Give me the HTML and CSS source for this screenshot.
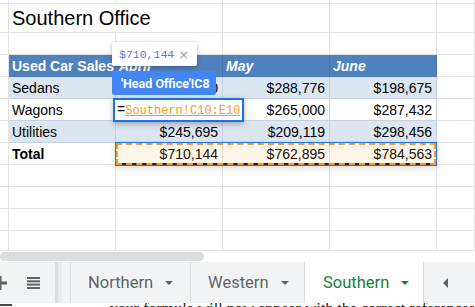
FILE: index.html
```html
<!DOCTYPE html>
<html lang="en">
<head>
    <meta charset="UTF-8">
    <title>Southern Office</title>
    <link rel="stylesheet" href="styles.css">
</head>
<body>
    <div class="sheet">
        <div class="grid">
            <div class="c"></div><div class="c"></div><div class="c"></div><div class="c"></div><div class="c"></div><div class="c"></div>

            <div class="c"></div>
            <div class="c title">Southern Office</div>
            <div class="c"></div><div class="c"></div><div class="c"></div>

            <div class="c"></div><div class="c"></div><div class="c"></div><div class="c"></div><div class="c"></div><div class="c"></div>

            <div class="c"></div>
            <div class="c head">Used Car Sales</div>
            <div class="c head month">April</div>
            <div class="c head month">May</div>
            <div class="c head month">June</div>
            <div class="c"></div>

            <div class="c"></div>
            <div class="c band">Sedans</div>
            <div class="c band num">$231,560</div>
            <div class="c band num">$288,776</div>
            <div class="c band num">$198,675</div>
            <div class="c"></div>

            <div class="c"></div>
            <div class="c plain">Wagons</div>
            <div class="c plain num">$232,889</div>
            <div class="c plain num">$265,000</div>
            <div class="c plain num">$287,432</div>
            <div class="c"></div>

            <div class="c"></div>
            <div class="c band">Utilities</div>
            <div class="c band num">$245,695</div>
            <div class="c band num">$209,119</div>
            <div class="c band num">$298,456</div>
            <div class="c"></div>

            <div class="c"></div>
            <div class="c total">Total</div>
            <div class="c num">$710,144</div>
            <div class="c num">$762,895</div>
            <div class="c num">$784,563</div>
            <div class="c"></div>

            <div class="c"></div><div class="c"></div><div class="c"></div><div class="c"></div><div class="c"></div><div class="c"></div>
            <div class="c"></div><div class="c"></div><div class="c"></div><div class="c"></div><div class="c"></div><div class="c"></div>
            <div class="c"></div><div class="c"></div><div class="c"></div><div class="c"></div><div class="c"></div><div class="c"></div>
            <div class="c"></div><div class="c"></div><div class="c"></div><div class="c"></div><div class="c"></div><div class="c"></div>
        </div>

        <!-- range being referenced by the formula -->
        <div class="range-box"></div>

        <div class="editor">=<span class="ref">Southern!C10:E10</span></div>

        <div class="value-tip">
            <span class="value">$710,144</span>
            <span class="close">&times;</span>
        </div>

        <div class="ref-tip">'Head Office'!C8</div>
    </div>

    <div class="hscroll">
        <div class="thumb"></div>
    </div>

    <div class="tabs">
        <div class="tools">
            <svg class="plus" width="14" height="14" viewBox="0 0 14 14">
                <rect x="0" y="5.5" width="14" height="3" fill="#5f6368"/>
                <rect x="5.5" y="0" width="3" height="14" fill="#5f6368"/>
            </svg>
            <svg class="list" width="13" height="12" viewBox="0 0 13 12">
                <rect x="0" y="0" width="13" height="2" fill="#5f6368"/>
                <rect x="0" y="3.3" width="13" height="2" fill="#5f6368"/>
                <rect x="0" y="6.6" width="13" height="2" fill="#5f6368"/>
                <rect x="0" y="10" width="13" height="2" fill="#5f6368"/>
            </svg>
        </div>
        <div class="divider"></div>
        <div class="tab northern">Northern <span class="caret"></span></div>
        <div class="tab western">Western <span class="caret"></span></div>
        <div class="tab active">Southern <span class="caret"></span></div>
        <div class="nav"><span class="left-arrow"></span></div>
    </div>

    <div class="below">
        <div class="rule"></div>
        <div class="below-text">your formula will now appear with the correct references</div>
    </div>
</body>
</html>
```

FILE: styles.css
```css
* {
    margin: 0;
    padding: 0;
    box-sizing: border-box;
}

body {
    width: 475px;
    height: 307px;
    overflow: hidden;
    background: #fff;
    font-family: "Liberation Sans", Arial, sans-serif;
    color: #000;
}

.sheet {
    position: relative;
    height: 250px;
    overflow: hidden;
}

.grid {
    display: grid;
    grid-template-columns: 9px repeat(4, 107px) 1fr;
    grid-template-rows: 4px 29px repeat(10, 22px);
}

.c {
    border-right: 1px solid #e2e2e2;
    border-bottom: 1px solid #e2e2e2;
    font-size: 14px;
    padding: 0 3px;
    display: flex;
    align-items: center;
    white-space: nowrap;
    overflow: hidden;
}

.title {
    grid-column: span 2;
    font-size: 20px;
    align-items: flex-end;
    padding-bottom: 2px;
    overflow: visible;
}

.head {
    background: #4f81bd;
    border-right-color: #4575b0;
    border-bottom-color: #4a7bb6;
    color: #fff;
    font-weight: bold;
    overflow: visible;
}

.month {
    font-style: italic;
}

.band {
    background: #dce6f1;
    border-right-color: #c3d0e1;
    border-bottom-color: #c3d0e1;
}

.plain {
    border-right-color: #c3d0e1;
    border-bottom-color: #c3d0e1;
}

.num {
    justify-content: flex-end;
    padding-right: 4px;
}

.total {
    font-weight: bold;
}

.range-box {
    position: absolute;
    left: 115px;
    top: 142px;
    width: 322px;
    height: 24px;
    border: 1px solid #1a73e8;
    background: rgba(246, 160, 44, 0.1);
    box-shadow: 0 2px 6px rgba(0, 0, 0, 0.15);
}

.range-box::before {
    content: "";
    position: absolute;
    left: 0;
    right: 0;
    bottom: 0;
    height: 2px;
    background: #222;
}

.range-box::after {
    content: "";
    position: absolute;
    inset: 0;
    border: 2px dashed #f39c2d;
}

.editor {
    position: absolute;
    left: 113px;
    top: 98px;
    width: 131px;
    height: 24px;
    border: 2px solid #1a73e8;
    background: #fff;
    box-shadow: 0 2px 6px rgba(0, 0, 0, 0.3);
    font-size: 14px;
    line-height: 19px;
    padding-left: 2px;
    white-space: nowrap;
    overflow: hidden;
}

.ref {
    font-family: "Liberation Mono", monospace;
    font-size: 12px;
    color: #f29a2b;
    text-decoration: underline;
}

.value-tip {
    position: absolute;
    left: 112px;
    top: 42px;
    width: 85px;
    height: 24px;
    background: #fff;
    border-radius: 2px;
    box-shadow: 0 1px 4px rgba(0, 0, 0, 0.3);
    display: flex;
    align-items: center;
    padding-left: 7px;
    gap: 4px;
}

.value {
    font-family: "Liberation Mono", monospace;
    font-size: 11.5px;
    color: #5679d6;
}

.close {
    font-family: "DejaVu Sans", sans-serif;
    font-size: 13px;
    color: #9aa0a6;
}

.ref-tip {
    position: absolute;
    left: 112px;
    top: 71px;
    width: 104px;
    height: 24px;
    background: #4285f4;
    border-radius: 2px;
    color: #fff;
    font-family: Roboto, "Liberation Sans", sans-serif;
    font-weight: bold;
    font-size: 12.5px;
    display: flex;
    align-items: center;
    padding-left: 9px;
    white-space: nowrap;
}

.hscroll {
    height: 12px;
    border-top: 1px solid #e6e6e6;
    padding-top: 1px;
}

.thumb {
    width: 204px;
    height: 9px;
    border-radius: 5px;
    background: #dadce0;
}

.tabs {
    display: flex;
    height: 41px;
    background: #f1f3f4;
    font-family: Roboto, "Liberation Sans", sans-serif;
    font-size: 16.5px;
    color: #5f6368;
}

.tools {
    width: 55px;
    position: relative;
    display: flex;
    align-items: center;
}

.plus {
    margin-left: -7px;
}

.list {
    margin-left: 20px;
}

.divider {
    width: 16px;
    border-left: 3px solid #dadce0;
    border-right: 1px solid #dadce0;
    background: linear-gradient(90deg, #e8eaed 0, #e8eaed 4px, #f1f3f4 4px);
}

.tab {
    display: flex;
    align-items: center;
    padding-left: 17px;
    border-right: 1px solid #dadce0;
    white-space: nowrap;
}

.northern {
    width: 120px;
}

.western {
    width: 114px;
}

.active {
    width: 119px;
    background: #fff;
    color: #188038;
    padding-left: 18px;
}

.caret {
    display: inline-block;
    width: 0;
    height: 0;
    margin-left: 12px;
    border-left: 4px solid transparent;
    border-right: 4px solid transparent;
    border-top: 4px solid currentColor;
}

.nav {
    flex: 1;
    display: flex;
    align-items: center;
    padding-left: 19px;
}

.left-arrow {
    width: 0;
    height: 0;
    border-top: 5px solid transparent;
    border-bottom: 5px solid transparent;
    border-right: 5px solid #5f6368;
}

.below {
    height: 4px;
    overflow: hidden;
    display: flex;
}

.rule {
    width: 97px;
    height: 2px;
    margin-top: 1px;
    background: #444;
}

.below-text {
    margin-left: 98px;
    margin-top: -2px;
    font-family: "Liberation Serif", serif;
    font-size: 16px;
    line-height: 16px;
    white-space: nowrap;
    color: #222;
}
```
